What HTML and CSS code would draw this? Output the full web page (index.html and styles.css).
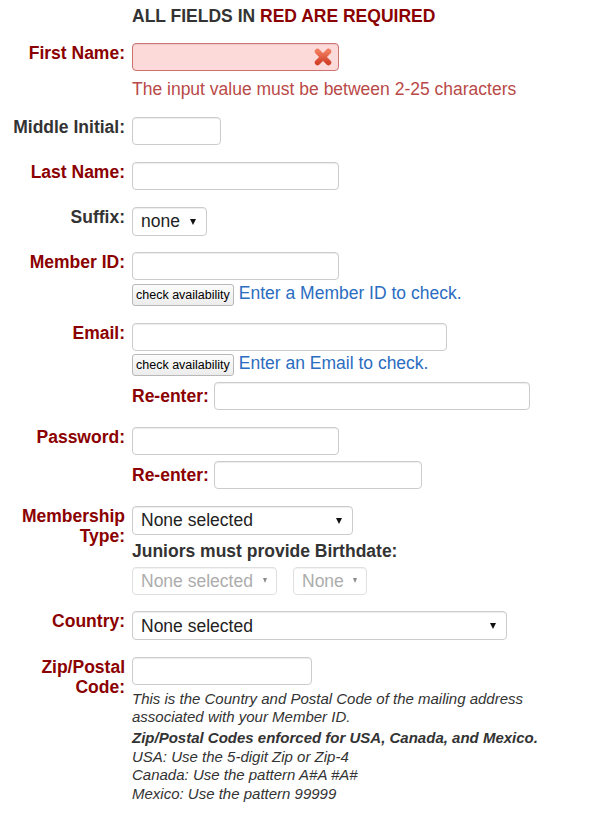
FILE: index.html
```html
<!DOCTYPE html>
<html>
<head>
<meta charset="utf-8">
<title>Registration</title>
<link rel="stylesheet" href="styles.css">
</head>
<body>
<div class="form">
  <div class="notice"><span>ALL FIELDS IN </span><span class="req">RED ARE REQUIRED</span></div>

  <div class="row">
    <label class="lbl">First Name:</label>
    <div class="fld">
      <div class="xwrap">
        <input class="inp w207 invalid" type="text">
        <svg class="xicon" width="20" height="20" viewBox="0 0 20 20" aria-hidden="true">
          <defs>
            <linearGradient id="xg" x1="0" y1="0" x2="0" y2="1">
              <stop offset="0" stop-color="#f07a5c"/>
              <stop offset="1" stop-color="#d2432a"/>
            </linearGradient>
          </defs>
          <path d="M4.5 4.5 L15.5 15.5 M15.5 4.5 L4.5 15.5" stroke="url(#xg)" stroke-width="5.5" stroke-linecap="round" fill="none"/>
        </svg>
      </div>
      <div class="errmsg">The input value must be between 2-25 characters</div>
    </div>
  </div>

  <div class="row">
    <label class="lbl opt">Middle Initial:</label>
    <div class="fld"><input class="inp w89" type="text"></div>
  </div>

  <div class="row">
    <label class="lbl">Last Name:</label>
    <div class="fld"><input class="inp w207" type="text"></div>
  </div>

  <div class="row">
    <label class="lbl opt">Suffix:</label>
    <div class="fld">
      <div class="sel w75"><select><option>none</option></select></div>
    </div>
  </div>

  <div class="row">
    <label class="lbl">Member ID:</label>
    <div class="fld">
      <input class="inp w207" type="text">
      <div class="chk"><button class="btn" type="button">check availability</button><span class="hint">Enter a Member ID to check.</span></div>
    </div>
  </div>

  <div class="row">
    <label class="lbl">Email:</label>
    <div class="fld">
      <input class="inp w315" type="text">
      <div class="chk"><button class="btn" type="button">check availability</button><span class="hint">Enter an Email to check.</span></div>
      <div class="sub"><span class="sublbl">Re-enter:</span><input class="inp w316" type="text"></div>
    </div>
  </div>

  <div class="row">
    <label class="lbl">Password:</label>
    <div class="fld">
      <input class="inp w207" type="password">
      <div class="sub"><span class="sublbl">Re-enter:</span><input class="inp w208" type="password"></div>
    </div>
  </div>

  <div class="row">
    <label class="lbl">Membership Type:</label>
    <div class="fld">
      <div class="sel w221"><select><option>None selected</option></select></div>
      <div class="jun">Juniors must provide Birthdate:</div>
      <div class="birth">
        <div class="sel dis w145"><select disabled><option>None selected</option></select></div>
        <div class="sel dis w74"><select disabled><option>None</option></select></div>
      </div>
    </div>
  </div>

  <div class="row">
    <label class="lbl">Country:</label>
    <div class="fld">
      <div class="sel w375"><select><option>None selected</option></select></div>
    </div>
  </div>

  <div class="row">
    <label class="lbl">Zip/Postal Code:</label>
    <div class="fld">
      <input class="inp w180" type="text">
      <div class="help">
        <p>This is the Country and Postal Code of the mailing address associated with your Member ID.</p>
        <p class="p2"><b>Zip/Postal Codes enforced for USA, Canada, and Mexico.</b><br>USA: Use the 5-digit Zip or Zip-4<br>Canada: Use the pattern A#A #A#<br>Mexico: Use the pattern 99999</p>
      </div>
    </div>
  </div>
</div>
</body>
</html>
```

FILE: styles.css
```css
* { box-sizing: border-box; }

body {
  margin: 0;
  padding: 6px 8px 0 8px;
  font-family: "Liberation Sans", Arial, sans-serif;
  font-size: 17.5px;
  color: #333;
  background: #fff;
}

.notice {
  margin-left: 124px;
  font-weight: bold;
  line-height: 20px;
  color: #333;
}
.req { color: #8b0000; }

.row {
  display: flex;
  align-items: flex-start;
  margin-top: 16.7px;
}

.lbl {
  flex: none;
  width: 117px;
  text-align: right;
  font-weight: bold;
  line-height: 20px;
  color: #8b0000;
}
.lbl.opt { color: #333; }

.fld {
  margin-left: 7px;
  display: flex;
  flex-direction: column;
  align-items: flex-start;
}

.inp {
  height: 28px;
  border: 1px solid #ccc;
  border-radius: 4px;
  box-shadow: inset 0 1px 1px rgba(0, 0, 0, 0.075);
  padding: 0 8px;
  font: inherit;
  color: #222;
  background: #fff;
  margin: 0;
}
.inp.invalid {
  background: #fcdada;
  border-color: #cf7272;
}

.w89 { width: 89px; }
.w180 { width: 180px; }
.w207 { width: 207px; }
.w208 { width: 208px; }
.w315 { width: 315px; }
.w316 { width: 316px; }

.xwrap { position: relative; }
.xicon {
  position: absolute;
  right: 6px;
  top: 4px;
}

.errmsg {
  color: #b94a48;
  line-height: 20px;
  margin-top: 8px;
  margin-bottom: 2px;
}

.sel {
  position: relative;
  display: block;
}
.sel select {
  -webkit-appearance: none;
  appearance: none;
  width: 100%;
  height: 29px;
  border: 1px solid #ccc;
  border-radius: 4px;
  box-shadow: inset 0 1px 1px rgba(0, 0, 0, 0.075);
  padding: 0 0 0 8px;
  margin: 0;
  font: inherit;
  color: #222;
  background: #fff;
}
.sel::after {
  content: "";
  position: absolute;
  right: 11px;
  top: 50%;
  margin-top: -2.5px;
  border-left: 3.5px solid transparent;
  border-right: 3.5px solid transparent;
  border-top: 6px solid #111;
  pointer-events: none;
}
.sel.dis select {
  color: #8a8a8a;
  height: 28px;
  border-color: #d4d4d4;
}
.sel.dis::after {
  border-left-width: 2.5px;
  border-right-width: 2.5px;
  border-top: 5px solid #8a8a8a;
  right: 10px;
}

.w75 { width: 75px; }
.w221 { width: 221px; }
.w145 { width: 145px; }
.w74 { width: 74px; }
.w375 { width: 375px; }

.chk {
  display: flex;
  align-items: flex-start;
  margin-top: 3.5px;
  height: 22px;
}
.btn {
  font-family: "Liberation Sans", Arial, sans-serif;
  font-size: 12.5px;
  height: 22px;
  padding: 0 3px;
  margin: 0;
  border: 1px solid #b8b8b8;
  border-radius: 3px;
  background: linear-gradient(#fcfcfc, #ececec);
  color: #000;
}
.hint {
  color: #2b6dc0;
  margin-left: 5px;
  line-height: 18px;
}

.sub {
  display: flex;
  align-items: center;
  margin-top: 6px;
}
.sublbl {
  font-weight: bold;
  color: #8b0000;
  line-height: 20px;
  margin-right: 5px;
}

.jun {
  font-weight: bold;
  color: #333;
  line-height: 20px;
  margin-top: 6px;
}
.birth {
  display: flex;
  gap: 16px;
  margin-top: 6px;
}

.help {
  font-size: 15px;
  font-style: italic;
  line-height: 18.5px;
  color: #333;
  margin-top: 5px;
  max-width: 420px;
}
.help p { margin: 0; }
.help .p2 { margin-top: 2.5px; }
```
